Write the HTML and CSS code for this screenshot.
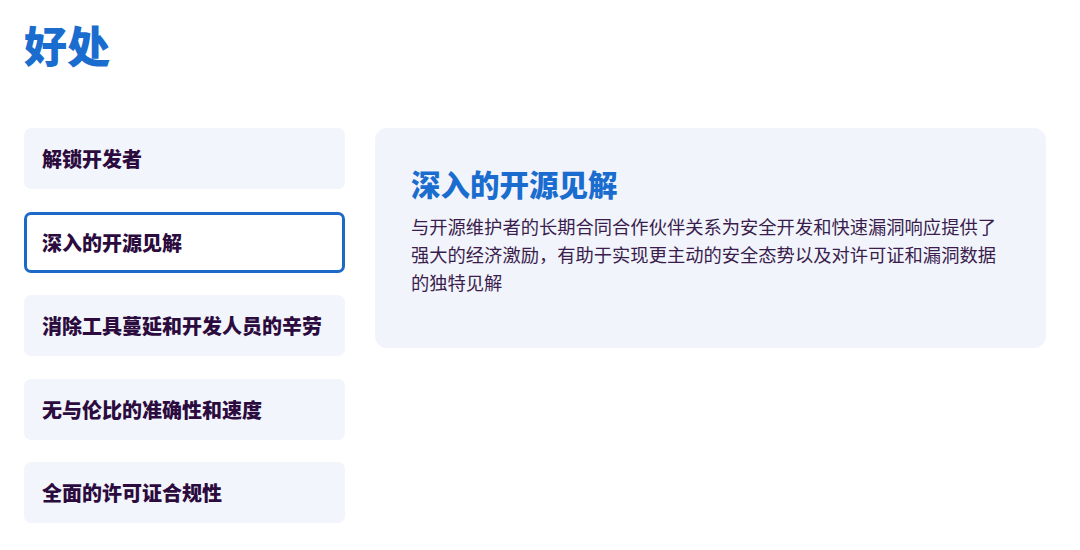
FILE: index.html
```html
<!DOCTYPE html>
<html lang="zh-CN">
<head>
<meta charset="utf-8">
<link rel="stylesheet" href="styles.css">
</head>
<body>
<main class="page">
  <h1 class="title">好处</h1>
  <section class="benefits">
    <ul class="tabs">
      <li class="tab">解锁开发者</li>
      <li class="tab active">深入的开源见解</li>
      <li class="tab">消除工具蔓延和开发人员的辛劳</li>
      <li class="tab">无与伦比的准确性和速度</li>
      <li class="tab">全面的许可证合规性</li>
    </ul>
    <article class="panel">
      <h2 class="panel-title">深入的开源见解</h2>
      <p class="panel-text">与开源维护者的长期合同合作伙伴关系为安全开发和快速漏洞响应提供了强大的经济激励，有助于实现更主动的安全态势以及对许可证和漏洞数据的独特见解</p>
    </article>
  </section>
</main>
</body>
</html>
```
FILE: styles.css
```css
* { box-sizing: border-box; }
html, body {
  margin: 0;
  padding: 0;
  background: #ffffff;
}
body {
  font-family: "Noto Sans CJK SC", "Noto Sans", sans-serif;
}
.page {
  padding: 14px 24px 0 24px;
}
.title {
  margin: 0;
  font-size: 43px;
  line-height: 60px;
  font-weight: 900;
  color: #1a6dce;
}
.benefits {
  display: flex;
  align-items: flex-start;
  gap: 30px;
  margin-top: 54px;
}
.tabs {
  list-style: none;
  margin: 0;
  padding: 0;
  width: 321px;
  display: flex;
  flex-direction: column;
  gap: 22.5px;
}
.tab {
  height: 61px;
  display: flex;
  align-items: center;
  padding-left: 18px;
  background: #f2f5fb;
  border-radius: 7px;
  font-size: 20px;
  font-weight: 900;
  color: #2c0b3e;
}
.tab.active {
  background: #ffffff;
  border: 3px solid #1d69c8;
  padding-left: 15px;
}
.panel {
  width: 671px;
  height: 220px;
  background: #f1f4fb;
  border-radius: 12px;
  padding: 34px 36px 0 36px;
}
.panel-title {
  margin: 0;
  font-size: 29.5px;
  line-height: 42px;
  font-weight: 900;
  color: #1a6dce;
}
.panel-text {
  margin: 8px 0 0 0;
  width: 592px;
  font-size: 18.3px;
  line-height: 28px;
  font-weight: 400;
  color: #3a1d4d;
}
```
